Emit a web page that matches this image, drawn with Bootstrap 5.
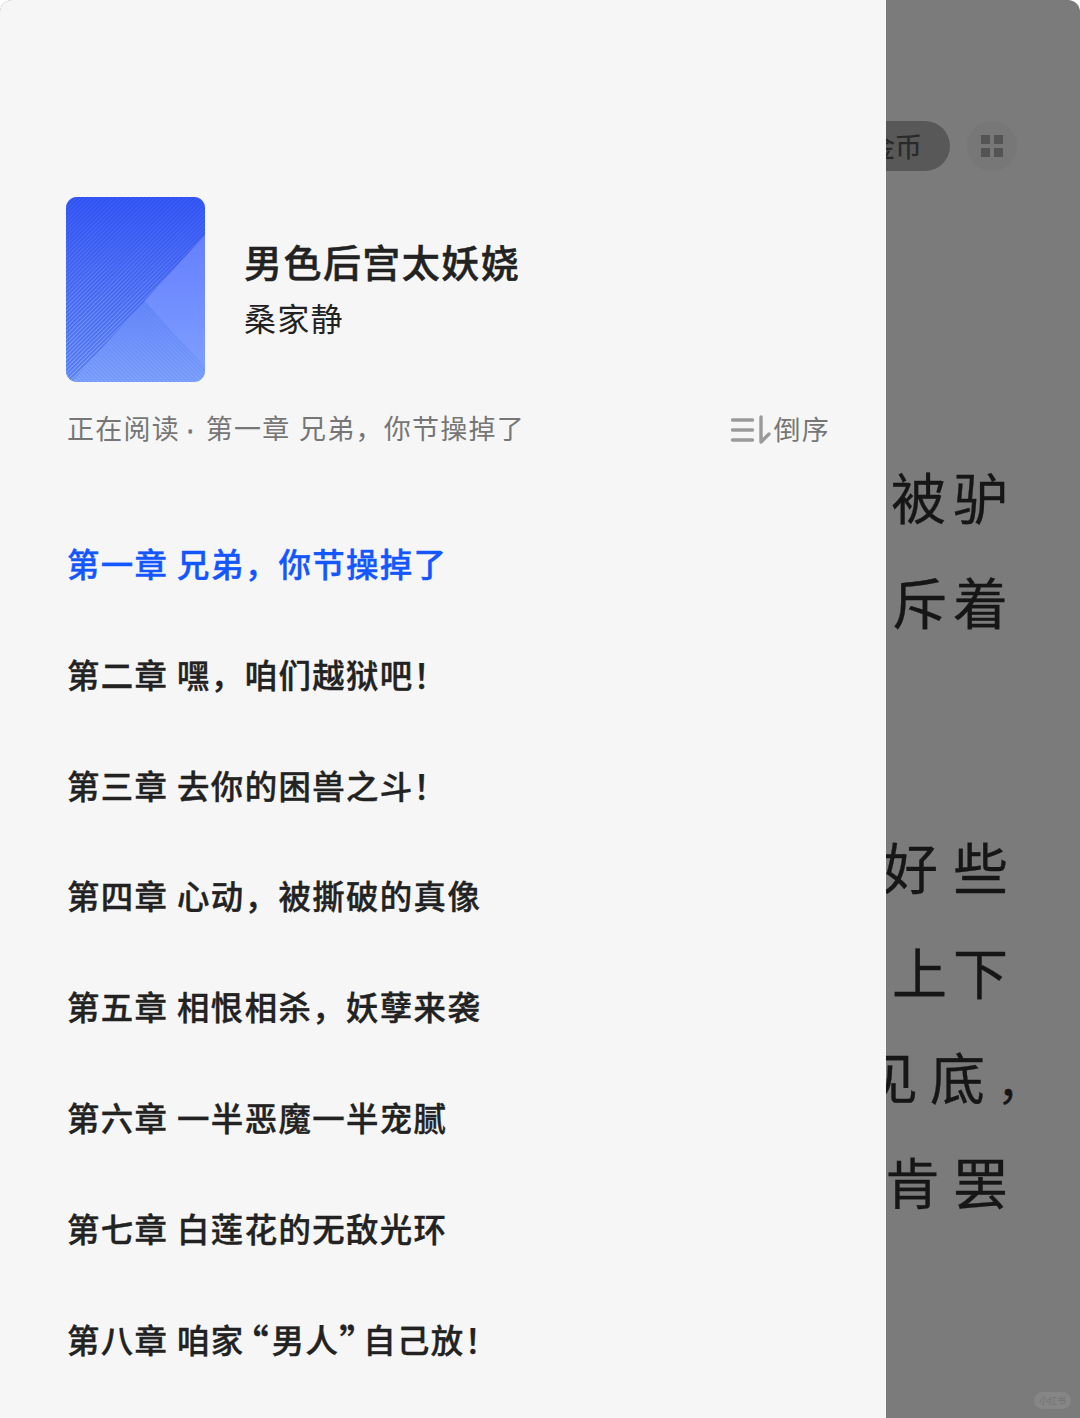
<!DOCTYPE html>
<html lang="zh-CN">
<head>
<meta charset="utf-8">
<meta name="viewport" content="width=device-width, initial-scale=1">
<title>目录</title>
<link href="https://cdn.jsdelivr.net/npm/bootstrap@5.3.0/dist/css/bootstrap.min.css" rel="stylesheet">
<style>
body{background:#fff;font-family:"Noto Sans CJK SC",sans-serif;color:#222}
.screen{height:1418px;background:#7b7b7b;border-radius:12px 12px 0 0}
.drawer{width:886px;background:#f6f6f6;padding:197px 56px 0 67px}
.cover{width:139px;height:185px;border-radius:11px;margin:0 39px 0 -1px}
.book-title{font-size:38px;letter-spacing:1.45px;line-height:56px;font-weight:500;margin-top:-6px;-webkit-text-stroke:.5px #222}
.author{font-size:32px;letter-spacing:1.3px;line-height:48px;margin-top:4px}
.status{font-size:27px;letter-spacing:1.25px;word-spacing:1.4px;line-height:40px;color:#767676;margin-top:26px}
.dot{font-family:"Liberation Sans",sans-serif;margin:0 1px 0 -3px;-webkit-text-stroke:.8px #767676}
.chapters{margin-top:83px}
.chapter{font-size:32.4px;letter-spacing:1.4px;line-height:48px;height:110.8px;padding:6px 0 0;color:#222;font-weight:500;-webkit-text-stroke:.4px currentColor}
.chapter.current{color:#1456ff}
.ql,.qr{font-size:38px;line-height:1;vertical-align:-4px}
.ql{letter-spacing:3px;margin-left:-14px}.qr{letter-spacing:0;margin-right:-14px}
.reader{width:194px;color:#161616}
.topbar{margin-top:121px;height:50px}
.coin{height:50px;width:150px;border-radius:25px;background:#585858;color:#292929;font-size:27px;padding-right:28px;margin-right:17px;-webkit-text-stroke:.3px #292929}
.grid-btn{width:50px;height:50px;background:#777;margin-right:63px}
.lines{font-size:55px;line-height:105.3px;-webkit-text-stroke:.3px #161616}
.lines-a{margin-top:272px}
.lines-b{margin-top:159px}
.ln{height:105.3px;white-space:nowrap}
.sp0{letter-spacing:6px;margin-right:66px}
.sp1{letter-spacing:7px;margin-right:65px}
.sp2{letter-spacing:15px;margin-right:57px}
.sp3{letter-spacing:12px;margin-right:25px}
.comma{font-size:46px;line-height:1;letter-spacing:12px}
.sp4{letter-spacing:13px;margin-right:59px}
.wm{right:9px;bottom:9px;width:37px;height:17px;border-radius:9px;background:#868686;color:#737373;font-size:9px;line-height:17px}
</style>
<script src="https://cdn.jsdelivr.net/npm/bootstrap@5.3.0/dist/js/bootstrap.bundle.min.js"></script>
</head>
<body>
<div class="screen d-flex position-relative overflow-hidden">
  <aside class="drawer flex-shrink-0">
    <div class="d-flex align-items-center">
      <svg class="cover flex-shrink-0" viewBox="0 0 138 185" preserveAspectRatio="none">
        <defs>
          <linearGradient id="g" x1="0" y1="0" x2="0" y2="1"><stop offset="0" stop-color="#3a5bff"/><stop offset=".5" stop-color="#6081fd"/><stop offset="1" stop-color="#82a6ff"/></linearGradient>
          <linearGradient id="r" x1="0" y1="0" x2="0" y2="1"><stop offset="0" stop-color="#667efe"/><stop offset="1" stop-color="#7d9eff"/></linearGradient>
          <pattern id="s" width="2.9" height="2.9" patternUnits="userSpaceOnUse" patternTransform="rotate(45)"><path d="M.8 0V2.9" stroke="#1f43d5" stroke-width="1.4" opacity=".55"/></pattern>
          <pattern id="t" width="2.9" height="2.9" patternUnits="userSpaceOnUse" patternTransform="rotate(-45)"><path d="M.8 0V2.9" stroke="#5a80e8" stroke-width="1.3" opacity=".45"/></pattern>
        </defs>
        <path fill="url(#g)" d="M0 0h138v185H0z"/>
        <path fill="url(#s)" d="M0 0h138v38L5 185H0z"/>
        <path fill="url(#r)" d="M138 38v132L78 104z"/>
        <path fill="url(#t)" d="M78 104l60 66v15H5z"/>
      </svg>
      <div>
        <div class="book-title">男色后宫太妖娆</div>
        <div class="author">桑家静</div>
      </div>
    </div>
    <div class="status d-flex justify-content-between align-items-center">
      <span>正在阅读 <span class="dot">·</span> 第一章 兄弟，你节操掉了</span>
      <span class="d-flex align-items-center">
        <svg width="44" height="32" viewBox="0 0 44 32" fill="none" stroke="#9a9a9a" stroke-width="3.4" stroke-linecap="round" stroke-linejoin="round"><path d="M2.5 7h20M2.5 17h20M2.5 27h20M31 4v25l8-8"/></svg>倒序
      </span>
    </div>
    <div class="chapters">
      <div class="chapter current">第一章 兄弟，你节操掉了</div>
      <div class="chapter">第二章 嘿，咱们越狱吧！</div>
      <div class="chapter">第三章 去你的困兽之斗！</div>
      <div class="chapter">第四章 心动，被撕破的真像</div>
      <div class="chapter">第五章 相恨相杀，妖孽来袭</div>
      <div class="chapter">第六章 一半恶魔一半宠腻</div>
      <div class="chapter">第七章 白莲花的无敌光环</div>
      <div class="chapter">第八章 咱家<span class="ql">“</span>男人<span class="qr">”</span>自己放！</div>
    </div>
  </aside>
  <main class="reader overflow-hidden">
    <div class="topbar d-flex justify-content-end">
      <div class="coin d-flex align-items-center justify-content-end flex-shrink-0">金币</div>
      <div class="grid-btn rounded-circle d-flex align-items-center justify-content-center flex-shrink-0">
        <svg width="22" height="22" viewBox="0 0 22 22" fill="#545454"><path d="M0 0h9v9H0zM13 0h9v9h-9zM0 13h9v9H0zM13 13h9v9h-9z"/></svg>
      </div>
    </div>
    <div class="lines lines-a">
      <div class="ln d-flex justify-content-end"><span class="sp1">被驴</span></div>
      <div class="ln d-flex justify-content-end"><span class="sp0">斥着</span></div>
    </div>
    <div class="lines lines-b">
      <div class="ln d-flex justify-content-end"><span class="sp2">好些</span></div>
      <div class="ln d-flex justify-content-end"><span class="sp0">上下</span></div>
      <div class="ln d-flex justify-content-end"><span class="sp3">见底<span class="comma">，</span></span></div>
      <div class="ln d-flex justify-content-end"><span class="sp4">肯罢</span></div>
    </div>
  </main>
  <div class="wm position-absolute text-center">小红书</div>
</div>
</body>
</html>
